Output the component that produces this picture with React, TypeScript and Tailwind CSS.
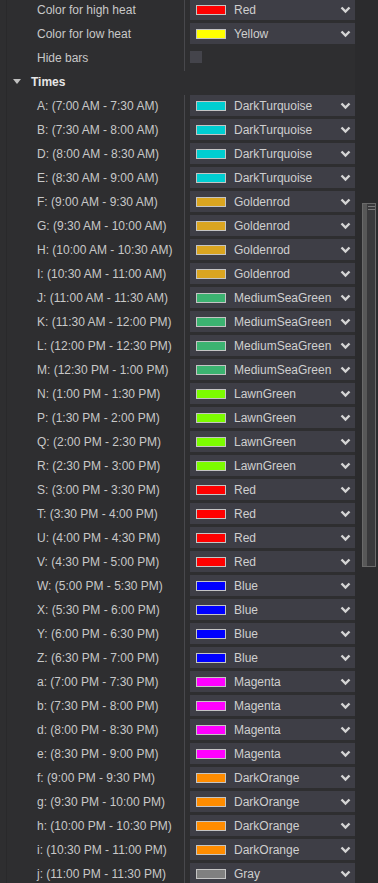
import React from "react";

type Row = { label: string; color: string; name: string };

const swatches: Record<string, string> = {
  Red: "#ff0000",
  Yellow: "#ffff00",
  DarkTurquoise: "#00ced1",
  Goldenrod: "#daa520",
  MediumSeaGreen: "#3cb371",
  LawnGreen: "#7cfc00",
  Blue: "#0000ff",
  Magenta: "#ff00ff",
  DarkOrange: "#ff8c00",
  Gray: "#808080",
};

const times: [string, string][] = [
  ["A: (7:00 AM - 7:30 AM)", "DarkTurquoise"],
  ["B: (7:30 AM - 8:00 AM)", "DarkTurquoise"],
  ["D: (8:00 AM - 8:30 AM)", "DarkTurquoise"],
  ["E: (8:30 AM - 9:00 AM)", "DarkTurquoise"],
  ["F: (9:00 AM - 9:30 AM)", "Goldenrod"],
  ["G: (9:30 AM - 10:00 AM)", "Goldenrod"],
  ["H: (10:00 AM - 10:30 AM)", "Goldenrod"],
  ["I: (10:30 AM - 11:00 AM)", "Goldenrod"],
  ["J: (11:00 AM - 11:30 AM)", "MediumSeaGreen"],
  ["K: (11:30 AM - 12:00 PM)", "MediumSeaGreen"],
  ["L: (12:00 PM - 12:30 PM)", "MediumSeaGreen"],
  ["M: (12:30 PM - 1:00 PM)", "MediumSeaGreen"],
  ["N: (1:00 PM - 1:30 PM)", "LawnGreen"],
  ["P: (1:30 PM - 2:00 PM)", "LawnGreen"],
  ["Q: (2:00 PM - 2:30 PM)", "LawnGreen"],
  ["R: (2:30 PM - 3:00 PM)", "LawnGreen"],
  ["S: (3:00 PM - 3:30 PM)", "Red"],
  ["T: (3:30 PM - 4:00 PM)", "Red"],
  ["U: (4:00 PM - 4:30 PM)", "Red"],
  ["V: (4:30 PM - 5:00 PM)", "Red"],
  ["W: (5:00 PM - 5:30 PM)", "Blue"],
  ["X: (5:30 PM - 6:00 PM)", "Blue"],
  ["Y: (6:00 PM - 6:30 PM)", "Blue"],
  ["Z: (6:30 PM - 7:00 PM)", "Blue"],
  ["a: (7:00 PM - 7:30 PM)", "Magenta"],
  ["b: (7:30 PM - 8:00 PM)", "Magenta"],
  ["d: (8:00 PM - 8:30 PM)", "Magenta"],
  ["e: (8:30 PM - 9:00 PM)", "Magenta"],
  ["f: (9:00 PM - 9:30 PM)", "DarkOrange"],
  ["g: (9:30 PM - 10:00 PM)", "DarkOrange"],
  ["h: (10:00 PM - 10:30 PM)", "DarkOrange"],
  ["i: (10:30 PM - 11:00 PM)", "DarkOrange"],
  ["j: (11:00 PM - 11:30 PM)", "Gray"],
];

function Chevron() {
  return (
    <svg width="11" height="8" viewBox="0 0 11 8" className="shrink-0">
      <polyline
        points="1.5,1.5 5.5,5.5 9.5,1.5"
        fill="none"
        stroke="#d4d4d4"
        strokeWidth="2.4"
      />
    </svg>
  );
}

function ColorSelect({ name }: { name: string }) {
  return (
    <div className="ml-[5px] flex h-[21px] w-[165px] items-center bg-[#3e3e46] pl-[6px] pr-[4px]">
      <div
        className="h-[10px] w-[30px] shrink-0 border border-[#c4c4c4]"
        style={{ backgroundColor: swatches[name] }}
      />
      <span className="ml-[8px] flex-1 text-[12px] text-[#cfcfcf]">{name}</span>
      <Chevron />
    </div>
  );
}

function PropRow({ label, children }: { label: string; children: React.ReactNode }) {
  return (
    <div className="flex h-[24px] items-start">
      <div className="flex h-[24px] w-[178px] shrink-0 items-start border-r border-[#48484c]">
        <span className="flex h-[21px] items-center pl-[30px] text-[12px] text-[#c8c8c8]">
          {label}
        </span>
      </div>
      {children}
    </div>
  );
}

export default function App() {
  const rows: Row[] = times.map(([label, name]) => ({ label, name, color: swatches[name] }));

  return (
    <div
      className="flex h-[883px] w-[378px] overflow-hidden bg-[#2e2e30]"
      style={{ fontFamily: '"Liberation Sans", Arial, sans-serif' }}
    >
      {/* PROPERTY GRID */}
      <div className="flex w-[355px] shrink-0">
        <div className="w-[6px] shrink-0" />
        <div className="-mt-px flex-1 border-l border-[#29292b]">
          <PropRow label="Color for high heat">
            <ColorSelect name="Red" />
          </PropRow>
          <PropRow label="Color for low heat">
            <ColorSelect name="Yellow" />
          </PropRow>
          <PropRow label="Hide bars">
            <div className="ml-[5px] mt-[4px] h-[12px] w-[12px] bg-[#44444b]" />
          </PropRow>

          {/* SECTION HEADER */}
          <div className="flex h-[24px] items-start">
            <div className="flex h-[21px] items-center">
              <svg width="8" height="5" viewBox="0 0 8 5" className="ml-[6px]">
                <polygon points="0,0 8,0 4,5" fill="#c0c0c0" />
              </svg>
              <span className="ml-[10px] text-[12px] font-bold text-[#e6e6e6]">Times</span>
            </div>
          </div>

          {rows.map((r) => (
            <PropRow key={r.label} label={r.label}>
              <ColorSelect name={r.name} />
            </PropRow>
          ))}
        </div>
      </div>

      {/* SCROLLBAR */}
      <div className="w-[23px] shrink-0 bg-[#2b2b2d] pt-[203px]">
        <div className="ml-[7px] flex h-[364px] w-[14px] border border-[#6a6a6a] bg-[#3a3a3c]">
          <div className="w-[4px] bg-[#585858]" />
          <div className="flex flex-1 flex-col items-center gap-[2px] pt-[2px]">
            <div className="h-px w-[7px] bg-[#7a7a7a]" />
            <div className="h-px w-[7px] bg-[#7a7a7a]" />
          </div>
        </div>
      </div>
    </div>
  );
}
